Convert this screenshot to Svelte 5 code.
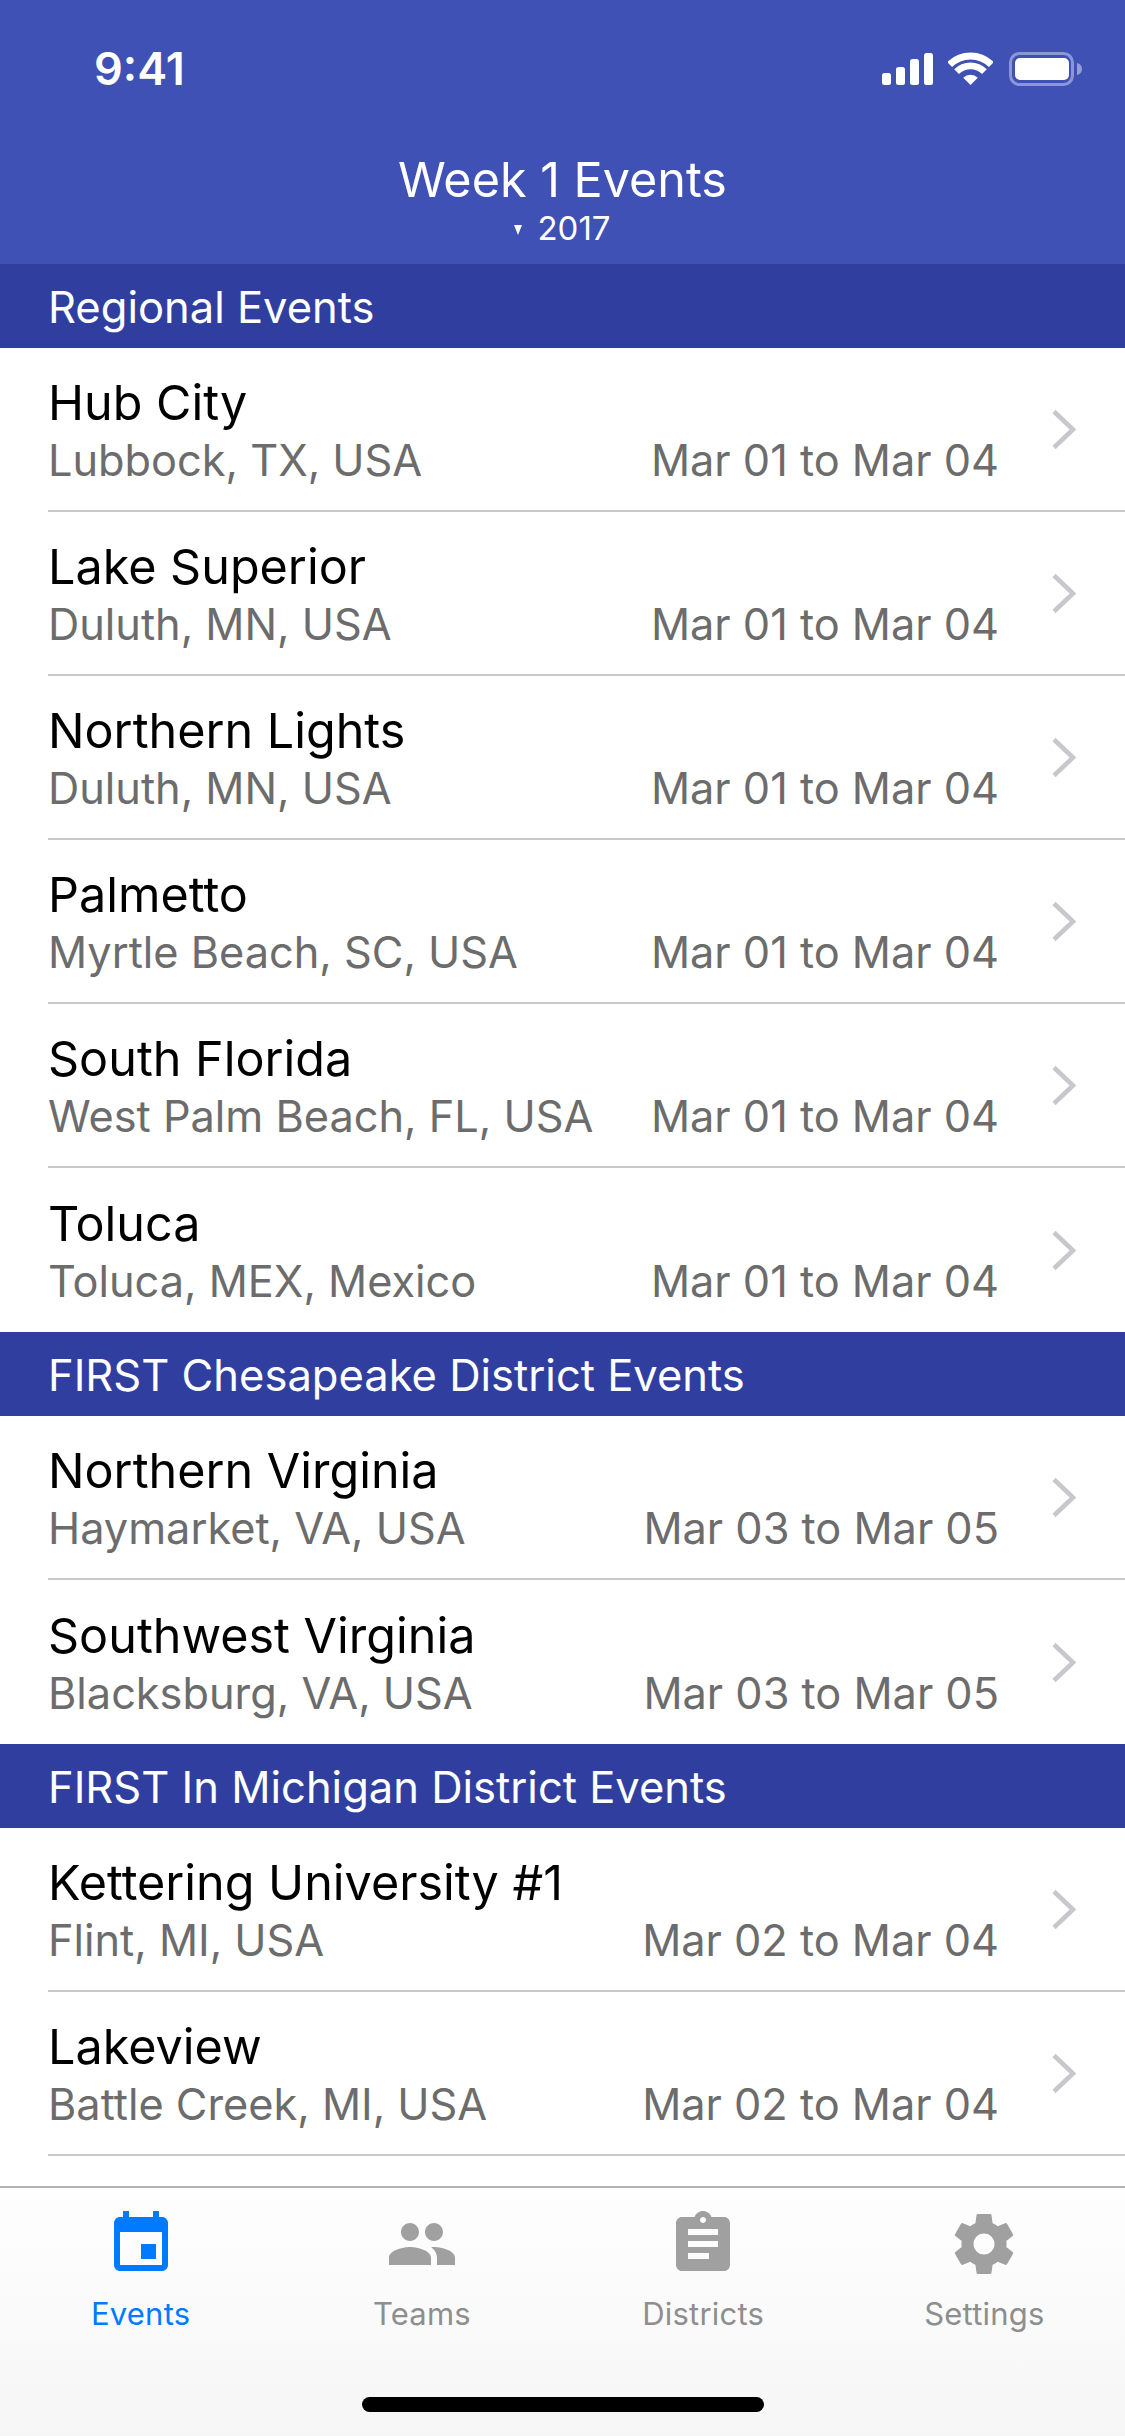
<script lang="ts">
  interface EventRow {
    name: string;
    place: string;
    dates: string;
  }
  interface Section {
    title: string;
    rows: EventRow[];
    lastOpen?: boolean;
  }

  const sections: Section[] = [
    {
      title: 'Regional Events',
      rows: [
        { name: 'Hub City', place: 'Lubbock, TX, USA', dates: 'Mar 01 to Mar 04' },
        { name: 'Lake Superior', place: 'Duluth, MN, USA', dates: 'Mar 01 to Mar 04' },
        { name: 'Northern Lights', place: 'Duluth, MN, USA', dates: 'Mar 01 to Mar 04' },
        { name: 'Palmetto', place: 'Myrtle Beach, SC, USA', dates: 'Mar 01 to Mar 04' },
        { name: 'South Florida', place: 'West Palm Beach, FL, USA', dates: 'Mar 01 to Mar 04' },
        { name: 'Toluca', place: 'Toluca, MEX, Mexico', dates: 'Mar 01 to Mar 04' }
      ]
    },
    {
      title: 'FIRST Chesapeake District Events',
      rows: [
        { name: 'Northern Virginia', place: 'Haymarket, VA, USA', dates: 'Mar 03 to Mar 05' },
        { name: 'Southwest Virginia', place: 'Blacksburg, VA, USA', dates: 'Mar 03 to Mar 05' }
      ]
    },
    {
      title: 'FIRST In Michigan District Events',
      lastOpen: true,
      rows: [
        { name: 'Kettering University #1', place: 'Flint, MI, USA', dates: 'Mar 02 to Mar 04' },
        { name: 'Lakeview', place: 'Battle Creek, MI, USA', dates: 'Mar 02 to Mar 04' }
      ]
    }
  ];

  const tabs = [
    {
      label: 'Events',
      active: true,
      d: 'M17 12h-5v5h5v-5zM16 1v2H8V1H6v2H5c-1.11 0-1.99.9-1.99 2L3 19c0 1.1.89 2 2 2h14c1.1 0 2-.9 2-2V5c0-1.1-.9-2-2-2h-1V1h-2zm3 18H5V8h14v11z'
    },
    {
      label: 'Teams',
      active: false,
      d: 'M16 11c1.66 0 2.99-1.34 2.99-3S17.66 5 16 5c-1.66 0-3 1.34-3 3s1.34 3 3 3zm-8 0c1.66 0 2.99-1.34 2.99-3S9.66 5 8 5C6.34 5 5 6.34 5 8s1.34 3 3 3zm0 2c-2.33 0-7 1.17-7 3.5V19h14v-2.5c0-2.33-4.67-3.5-7-3.5zm8 0c-.29 0-.62.02-.97.05 1.16.84 1.97 1.97 1.97 3.45V19h6v-2.5c0-2.33-4.67-3.5-7-3.5z'
    },
    {
      label: 'Districts',
      active: false,
      d: 'M19 3h-4.18C14.4 1.84 13.3 1 12 1c-1.3 0-2.4.84-2.82 2H5c-1.1 0-2 .9-2 2v14c0 1.1.9 2 2 2h14c1.1 0 2-.9 2-2V5c0-1.1-.9-2-2-2zm-7 0c.55 0 1 .45 1 1s-.45 1-1 1-1-.45-1-1 .45-1 1-1zm2 14H7v-2h7v2zm3-4H7v-2h10v2zm0-4H7V7h10v2z'
    },
    {
      label: 'Settings',
      active: false,
      d: 'M19.43 12.98c.04-.32.07-.64.07-.98s-.03-.66-.07-.98l2.11-1.65c.19-.15.24-.42.12-.64l-2-3.46c-.12-.22-.39-.3-.61-.22l-2.49 1c-.52-.4-1.08-.73-1.69-.98l-.38-2.65C14.46 2.18 14.25 2 14 2h-4c-.25 0-.46.18-.49.42l-.38 2.65c-.61.25-1.17.59-1.69.98l-2.49-1c-.23-.09-.49 0-.61.22l-2 3.46c-.13.22-.07.49.12.64l2.11 1.65c-.04.32-.07.65-.07.98s.03.66.07.98l-2.11 1.65c-.19.15-.24.42-.12.64l2 3.46c.12.22.39.3.61.22l2.49-1c.52.4 1.08.73 1.69.98l.38 2.65c.03.24.24.42.49.42h4c.25 0 .46-.18.49-.42l.38-2.65c.61-.25 1.17-.59 1.69-.98l2.49 1c.23.09.49 0 .61-.22l2-3.46c.12-.22.07-.49-.12-.64l-2.11-1.65zM12 15.5c-1.93 0-3.5-1.57-3.5-3.5s1.57-3.5 3.5-3.5 3.5 1.57 3.5 3.5-1.57 3.5-3.5 3.5z'
    }
  ];
</script>

<div class="screen">
  <header class="nav">
    <div class="status">
      <span class="time">9:41</span>
      <div class="status-icons">
        <svg class="signal" width="51" height="32" viewBox="0 0 51 32" fill="#fff">
          <rect x="0" y="20" width="9" height="12" rx="2.5" />
          <rect x="14" y="14" width="9" height="18" rx="2.5" />
          <rect x="28" y="6" width="9" height="26" rx="2.5" />
          <rect x="42" y="0" width="9" height="32" rx="2.5" />
        </svg>
        <svg class="wifi" width="45" height="33" viewBox="0 0 45 33" fill="none" stroke="#fff">
          <path d="M1.6 12.6A29.5 29.5 0 0 1 43.4 12.6" stroke-width="7" />
          <path d="M8.6 19.6A19.7 19.7 0 0 1 36.4 19.6" stroke-width="6.7" />
          <path d="M22.5 33L15.2 25.7A10.4 10.4 0 0 1 29.8 25.7Z" fill="#fff" stroke="none" />
        </svg>
        <svg class="battery" width="73" height="34" viewBox="0 0 73 34" fill="#fff">
          <rect x="1.5" y="1.5" width="62" height="31" rx="9" fill="none" stroke="#fff" stroke-opacity="0.4" stroke-width="3" />
          <rect x="6" y="6" width="54" height="22" rx="5" />
          <path d="M68 11c3 .6 5 3 5 6s-2 5.400-5 6z" fill-opacity="0.45" />
        </svg>
      </div>
    </div>
    <div class="nav-title">
      <h1>Week 1 Events</h1>
      <div class="year"><span class="caret"></span>2017</div>
    </div>
  </header>

  <main class="list">
    {#each sections as section}
      <h2 class="section">{section.title}</h2>
      {#each section.rows as row, i}
        <div class="row">
          <div class="row-inner" class:sep={i < section.rows.length - 1 || section.lastOpen}>
            <div class="text">
              <div class="name">{row.name}</div>
              <div class="meta">
                <span>{row.place}</span>
                <span>{row.dates}</span>
              </div>
            </div>
            <svg class="chevron" width="27" height="41" viewBox="0 0 27 41" fill="none" stroke="#c7c7cc" stroke-width="4.5">
              <path d="M3 2.500L22 20.500L3 38.500" />
            </svg>
          </div>
        </div>
      {/each}
    {/each}
  </main>

  <footer class="tabbar">
    <div class="tabs">
      {#each tabs as tab}
        <div class="tab" class:active={tab.active}>
          <svg width="72" height="72" viewBox="0 0 24 24" fill="currentColor"><path d={tab.d} /></svg>
          <span>{tab.label}</span>
        </div>
      {/each}
    </div>
    <div class="home"></div>
  </footer>
</div>

<style>
  :global(body) {
    margin: 0;
    background: #fff;
  }
  .screen {
    width: 1125px;
    height: 2436px;
    display: flex;
    flex-direction: column;
    overflow: hidden;
    font-family: Inter, 'Liberation Sans', sans-serif;
    color: #000;
  }

  .nav {
    height: 264px;
    flex: none;
    background: #3f51b5;
    color: #fff;
    display: flex;
    flex-direction: column;
  }
  .status {
    height: 136px;
    flex: none;
    display: flex;
    justify-content: space-between;
    align-items: flex-start;
    padding: 0 43px 0 94px;
  }
  .time {
    font-size: 45px;
    font-weight: 600;
    line-height: 54px;
    margin-top: 42px;
  }
  .status-icons {
    display: flex;
    align-items: flex-start;
    margin-top: 52px;
  }
  .signal {
    margin-top: 1px;
  }
  .wifi {
    margin-left: 15px;
  }
  .battery {
    margin-left: 16px;
  }

  .nav-title {
    text-align: center;
  }
  h1 {
    margin: 0;
    font-size: 48.5px;
    font-weight: 400;
    line-height: 60px;
    margin-top: 14px;
  }
  .year {
    font-size: 33px;
    line-height: 36px;
    display: flex;
    justify-content: center;
    align-items: center;
    gap: 15px;
  }
  .caret {
    width: 0;
    height: 0;
    border-left: 4px solid transparent;
    border-right: 4px solid transparent;
    border-top: 10px solid #fff;
    margin-top: 4px;
  }

  .list {
    flex: 1;
    min-height: 0;
    overflow: hidden;
    background: #fff;
  }
  .section {
    margin: 0;
    height: 84px;
    padding-left: 48px;
    background: #303f9f;
    color: #fff;
    font-size: 43.5px;
    font-weight: 400;
    line-height: 87px;
  }
  .row {
    height: 164px;
    padding-left: 48px;
  }
  .row-inner {
    height: 100%;
    box-sizing: border-box;
    display: flex;
    align-items: center;
    padding-right: 47px;
  }
  .row-inner.sep {
    border-bottom: 2px solid #c8c7cc;
  }
  .text {
    flex: 1;
    min-width: 0;
    margin-right: 52px;
    padding-top: 3px;
  }
  .name {
    font-size: 48.5px;
    line-height: 58px;
  }
  .meta {
    display: flex;
    justify-content: space-between;
    font-size: 43.3px;
    line-height: 56px;
    color: #6c6c6c;
  }
  .chevron {
    flex: none;
  }

  .tabbar {
    height: 250px;
    flex: none;
    box-sizing: border-box;
    border-top: 2px solid #b2b2b2;
    background: linear-gradient(#fefefe, #f6f6f6);
    display: flex;
    flex-direction: column;
    align-items: center;
  }
  .tabs {
    width: 100%;
    display: grid;
    grid-template-columns: repeat(4, 1fr);
    padding-top: 20px;
  }
  .tab {
    display: flex;
    flex-direction: column;
    align-items: center;
    color: #a0a0a0;
  }
  .tab.active {
    color: #007aff;
  }
  .tab span {
    font-size: 31px;
    letter-spacing: 0.2px;
    line-height: 36px;
    margin-top: 16px;
    color: #8e8e8e;
  }
  .tab.active span {
    color: #007aff;
  }
  .home {
    width: 402px;
    height: 15px;
    border-radius: 8px;
    background: #000;
    margin-top: 65px;
  }
</style>
